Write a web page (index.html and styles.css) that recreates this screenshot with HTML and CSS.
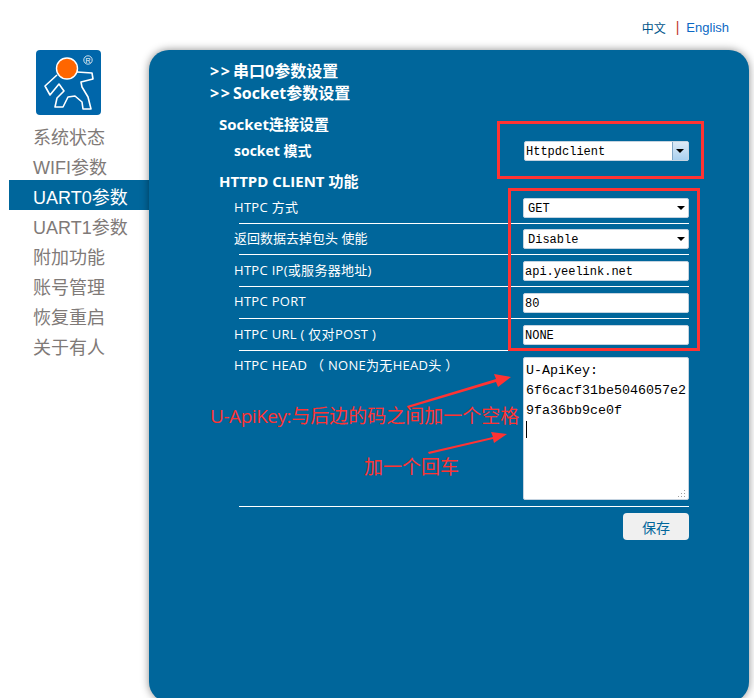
FILE: index.html
```html
<!doctype html>
<html lang="zh">
<head>
  <meta charset="UTF-8" />
  <title>串口参数设置</title>
  <link rel="stylesheet" href="styles.css">
</head>
<body>
  <div class="page">
    <div class="lang-bar">
      <a class="lang-cn" href="#">中文</a>
      <span class="lang-sep">|</span>
      <a class="lang-en" href="#">English</a>
    </div>

    <div class="main">
      <div class="sidebar">
        <svg class="logo" width="65" height="65" viewBox="0 0 65 65">
          <rect width="65" height="65" rx="4" fill="#0066aa" />
          <path d="M21 25L9 36L14 45L23 34L28 41L21 48L19 57L27 57L32 47L39 46L46 52L47 59L55 59L52 47L46 37L45 32L57 29L56 23L41 22" fill="none" stroke="#fff" stroke-width="1.6" stroke-linejoin="round" />
          <circle cx="31" cy="18.5" r="10.5" fill="#ff6600" stroke="#fff" stroke-width="1.4" />
          <circle cx="52" cy="10" r="4.2" fill="none" stroke="#fff" stroke-width="0.8" />
          <text class="logo-r" x="52" y="12.5" text-anchor="middle">R</text>
        </svg>
        <ul class="menu">
          <li>系统状态</li>
          <li>WIFI参数</li>
          <li class="active">UART0参数</li>
          <li>UART1参数</li>
          <li>附加功能</li>
          <li>账号管理</li>
          <li>恢复重启</li>
          <li>关于有人</li>
        </ul>
      </div>

      <div class="panel">
        <h2 class="title"><span class="arrows">&gt;&gt;</span>串口0参数设置</h2>
        <h2 class="title"><span class="arrows">&gt;&gt;</span>Socket参数设置</h2>

        <h3 class="section first">Socket连接设置</h3>
        <div class="row row-mode">
          <label class="label-bold">socket 模式</label>
          <div class="select select-combo">
            <span>Httpdclient</span>
            <i class="combo-btn"></i>
          </div>
        </div>

        <h3 class="section">HTTPD CLIENT 功能</h3>
        <div class="row">
          <label>HTPC 方式</label>
          <div class="select"><span>GET</span></div>
        </div>
        <div class="row row-tight">
          <label>返回数据去掉包头 使能</label>
          <div class="select"><span>Disable</span></div>
        </div>
        <div class="row">
          <label>HTPC IP(或服务器地址)</label>
          <input class="field" type="text" value="api.yeelink.net">
        </div>
        <div class="row">
          <label>HTPC PORT</label>
          <input class="field" type="text" value="80">
        </div>
        <div class="row">
          <label>HTPC URL ( 仅对POST )</label>
          <input class="field" type="text" value="NONE">
        </div>
        <div class="row row-head">
          <label>HTPC HEAD （ NONE为无HEAD头 ）</label>
          <div class="head-box">
            <textarea class="head-text">U-ApiKey:
6f6cacf31be5046057e29fa36bb9ce0f
</textarea>
            <i class="caret"></i>
            <svg class="grip" width="8" height="8" viewBox="0 0 8 8">
              <rect x="6" y="0" width="1" height="1" />
              <rect x="3" y="3" width="1" height="1" />
              <rect x="6" y="3" width="1" height="1" />
              <rect x="0" y="6" width="1" height="1" />
              <rect x="3" y="6" width="1" height="1" />
              <rect x="6" y="6" width="1" height="1" />
            </svg>
          </div>
        </div>
        <div class="actions">
          <button class="save-btn">保存</button>
        </div>
      </div>
    </div>

    <!-- annotations drawn on top of the screenshot -->
    <div class="mark mark-mode"></div>
    <div class="mark mark-httpd"></div>
    <svg class="arrow-layer" width="754" height="698" viewBox="0 0 754 698">
      <polygon points="407,406 496,379 494,374 511,377 498,387 496,382 408,408" fill="#f33" />
      <polygon points="428,452 493,437 491,432 507,434 494,443 493,439 429,454" fill="#f33" />
    </svg>
    <div class="note note-key"><span class="note-latin">U-ApiKey:</span>与后边的码之间加一个空格</div>
    <div class="note note-enter">加一个回车</div>
  </div>
</body>
</html>
```

FILE: styles.css
```css
:root {
  --panel-color: #00669b;
  --mark-color: #f33;
}

* {
  box-sizing: border-box;
}

body {
  margin: 0;
  padding: 0;
  background-color: #fff;
  font-family: "Open Sans", "Noto Sans CJK SC", sans-serif;
}

.page {
  position: relative;
  width: 754px;
  height: 698px;
  overflow: hidden;
}

.lang-bar {
  display: flex;
  justify-content: flex-end;
  align-items: center;
  gap: 9px;
  height: 54px;
  margin-bottom: -4px;
  padding-right: 25px;
  font-family: "Liberation Sans", "Noto Sans CJK SC", sans-serif;
  font-size: 12px;
}

.lang-bar a {
  text-decoration: none;
}

.lang-cn {
  margin-right: -1px;
  color: #00558a;
}

.lang-sep {
  margin: 0 -2px 0 2px;
  font-size: 14px;
  color: #c0392b;
}

.lang-en {
  color: #0b68c4;
  font-size: 13px;
}

.main {
  display: flex;
}

.sidebar {
  width: 149px;
  flex-shrink: 0;
}

.logo {
  display: block;
  margin-left: 36px;
}

.logo-r {
  font-family: "Liberation Sans", sans-serif;
  font-size: 7px;
  fill: #fff;
}

.menu {
  list-style: none;
  margin: 5px 0 0 9px;
  padding: 0;
  font-family: "Liberation Sans", "Noto Sans CJK SC", sans-serif;
}

.menu li {
  height: 30px;
  padding-left: 24px;
  font-size: 18px;
  line-height: 36px;
  color: #7f7a78;
}

.menu li.active {
  background-color: var(--panel-color);
  color: #fff;
}

.panel {
  position: relative;
  width: 600px;
  height: 652px;
  padding: 10px 60px 0 61px;
  background-color: var(--panel-color);
  border-radius: 20px;
  box-shadow: 0 0 8px rgba(0, 0, 0, 0.45);
  color: #fff;
}

.title {
  margin: 0;
  font-size: 16px;
  font-weight: 700;
  line-height: 22px;
}

.arrows {
  display: inline-block;
  width: 23px;
  letter-spacing: 1.5px;
}

.section {
  height: 21px;
  margin: 5px 0 0 9px;
  font-size: 15px;
  font-weight: 700;
  line-height: 20px;
}

.section.first {
  height: 22px;
  margin-top: 10px;
}

.row {
  display: flex;
  justify-content: space-between;
  align-items: center;
  width: 450px;
  height: 32px;
  margin-left: 29px;
  border-bottom: 1px solid #fff;
  font-size: 13px;
}

.row label {
  margin: 0 0 3px -5px;
  letter-spacing: 0.3px;
}

.row-tight {
  height: 31px;
}

.row-tight label {
  letter-spacing: 0;
}

.row-mode {
  height: 30px;
  border-bottom: none;
}

.row .label-bold {
  font-size: 14px;
  font-weight: 700;
  letter-spacing: 0;
}

.select,
.field {
  width: 166px;
  height: 20px;
  background-color: #fff;
  border: 1px solid #c5d3e0;
  border-radius: 2px;
  font-family: "Liberation Mono", monospace;
  font-size: 12px;
  color: #000;
}

.select {
  position: relative;
  display: flex;
  align-items: center;
  padding: 2px 0 0 4px;
}

/* dropdown triangle */
.select::after {
  content: "";
  position: absolute;
  top: 7px;
  right: 3px;
  border-left: 4px solid transparent;
  border-right: 4px solid transparent;
  border-top: 4px solid #000;
}

.select-combo {
  width: 165px;
  padding-left: 1px;
}

.combo-btn {
  position: absolute;
  top: 0;
  right: 0;
  width: 16px;
  height: 18px;
  background: linear-gradient(#ddeaf6, #a9d0f0);
  border-left: 1px solid #7fa6c6;
}

.select-combo::after {
  z-index: 1;
  right: 4px;
}

.field {
  padding: 2px 0 0 1px;
  outline: none;
}

.row-head {
  align-items: flex-start;
  height: 156px;
  padding-top: 6px;
}

.row-head label {
  line-height: 16px;
}

.head-box {
  position: relative;
  width: 166px;
  height: 143px;
}

.head-text {
  display: block;
  width: 166px;
  height: 143px;
  margin: 0;
  padding: 3px 1px 0 2px;
  background-color: #fff;
  border: 1px solid #c5d3e0;
  border-radius: 2px;
  font-family: "Liberation Mono", monospace;
  font-size: 13.33px;
  line-height: 20px;
  color: #000;
  overflow: hidden;
  outline: none;
  resize: none;
}

.caret {
  position: absolute;
  top: 64px;
  left: 3px;
  width: 1px;
  height: 17px;
  background-color: #000;
}

.grip {
  position: absolute;
  right: 3px;
  bottom: 2px;
  fill: #a0a0a0;
}

.actions {
  display: flex;
  justify-content: flex-end;
  width: 450px;
  margin: 6px 0 0 29px;
}

.save-btn {
  width: 66px;
  height: 27px;
  padding: 0;
  background-color: #f0f0f0;
  border: none;
  border-radius: 4px;
  font-family: "Noto Sans CJK SC", sans-serif;
  font-size: 14px;
  color: var(--panel-color);
}

.mark {
  position: absolute;
  border: 3px solid var(--mark-color);
}

.mark-mode {
  left: 497px;
  top: 121px;
  width: 207px;
  height: 58px;
}

.mark-httpd {
  left: 508px;
  top: 188px;
  width: 192px;
  height: 163px;
}

.arrow-layer {
  position: absolute;
  left: 0;
  top: 0;
}

.note {
  position: absolute;
  font-size: 19px;
  line-height: 24px;
  color: var(--mark-color);
  white-space: nowrap;
}

.note-latin {
  letter-spacing: -0.45px;
}

.note-key {
  left: 210px;
  top: 404px;
}

.note-enter {
  left: 364px;
  top: 455px;
}
```
